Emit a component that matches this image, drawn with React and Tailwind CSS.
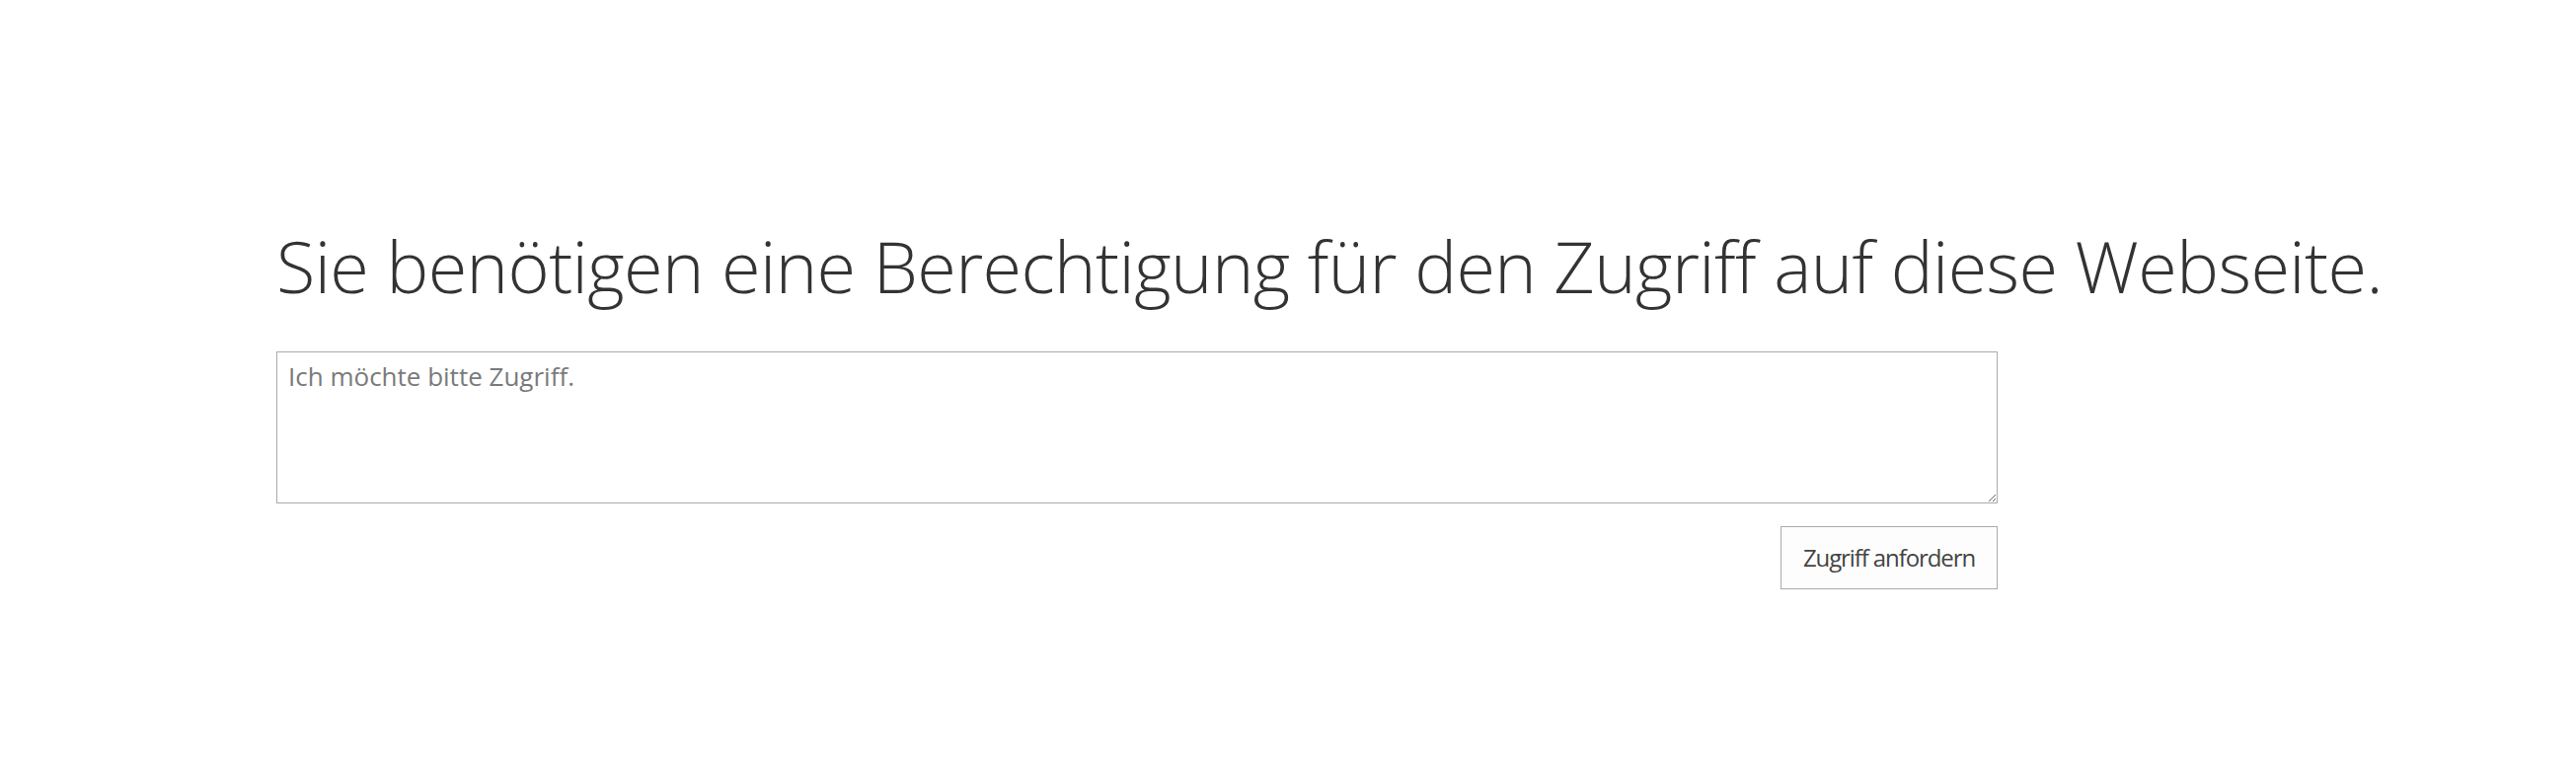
import { useState } from 'react';

const AccessRequest = () => {
  const [message, setMessage] = useState('');

  return (
    <div className="min-h-[780px] w-full bg-white pl-[280px] pt-[220px]" style={{ fontFamily: '"Open Sans", "Noto Sans", sans-serif' }}>
      <h1 className="text-[72px] font-light leading-[98px] text-[#333] tracking-[-0.6px] whitespace-nowrap">
        Sie benötigen eine Berechtigung für den Zugriff auf diese Webseite.
      </h1>

      <div className="w-[1744px] mt-[38px]">
        <textarea
          value={message}
          onChange={(e) => setMessage(e.target.value)}
          placeholder="Ich möchte bitte Zugriff."
          className="block w-full h-[154px] border border-[#ababab] px-[11px] py-[7px] text-[26px] leading-[34px] text-[#444] placeholder:text-[#7a7a7a] outline-none"
        />
        <div className="flex justify-end mt-[23px]">
          <button className="h-[64px] w-[220px] border border-[#ababab] bg-[#fdfdfd] text-[24px] tracking-[-1.1px] text-[#444]">
            Zugriff anfordern
          </button>
        </div>
      </div>
    </div>
  );
};

export default AccessRequest;
